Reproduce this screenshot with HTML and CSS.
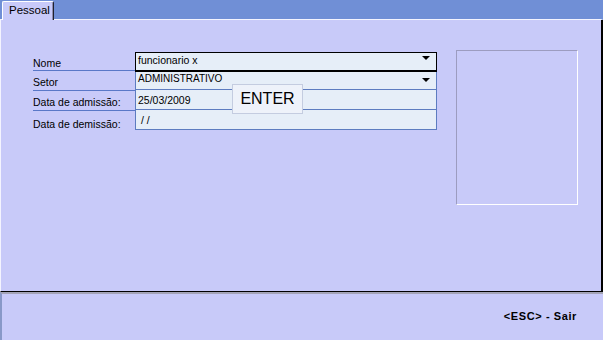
FILE: index.html
```html
<!DOCTYPE html>
<html>
<head>
<meta charset="utf-8">
<link rel="stylesheet" href="styles.css">
</head>
<body>
<div class="app">
  <div class="tabbar">
    <div class="tabgap"></div>
    <div class="tab">Pessoal</div>
    <div class="tabfill"></div>
  </div>
  <div class="panel">
    <div class="form">
      <div class="labels">
        <div class="lbl">Nome</div>
        <div class="lbl">Setor</div>
        <div class="lbl">Data de admissão:</div>
        <div class="lbl last">Data de demissão:</div>
      </div>
      <div class="fields">
        <div class="combo nome"><span>funcionario x</span><i class="arrow"></i></div>
        <div class="boxed">
          <div class="combo setor"><span>ADMINISTRATIVO</span><i class="arrow"></i></div>
          <div class="fld">25/03/2009</div>
          <div class="fld last">&nbsp;/ /</div>
        </div>
      </div>
    </div>
    <div class="photo"></div>
  </div>
  <div class="footer"><span class="esc">&lt;ESC&gt; - Sair</span></div>
  <div class="tip">ENTER</div>
</div>
</body>
</html>
```

FILE: styles.css
```css
* { box-sizing: border-box; }
html, body { margin: 0; padding: 0; }
body {
  width: 603px;
  height: 340px;
  overflow: hidden;
  background: #c8caf9;
  font-family: "Liberation Sans", Arial, sans-serif;
  color: #000;
}
.app {
  position: relative;
  width: 603px;
  height: 340px;
  display: flex;
  flex-direction: column;
}
.tabbar {
  height: 20px;
  display: flex;
  align-items: flex-end;
  background: #708fd6;
}
.tabgap {
  width: 2px;
  height: 20px;
  border-bottom: 1px solid #f4f4ff;
}
.tab {
  width: 52px;
  height: 19px;
  background: #c8caf9;
  border-left: 1px solid #ffffff;
  border-top: 1px solid #ffffff;
  border-right: 1px solid #20202c;
  box-shadow: inset -1px 0 0 #8c8cb0;
  border-radius: 2px 2px 0 0;
  font-size: 11.5px;
  line-height: 16px;
  padding-left: 6px;
}
.tabfill {
  flex: 1;
  height: 20px;
  border-bottom: 1px solid #f4f4ff;
  border-right: 2px solid #708fd6;
}
.panel {
  height: 272px;
  display: flex;
  align-items: flex-start;
  padding: 30px 0 0 32px;
  border-left: 1px solid #f4f4ff;
  border-right: 2px solid #000;
  border-bottom: 1px solid #000;
}
.form {
  display: flex;
  width: 404px;
  margin-top: 2px;
}
.labels {
  width: 102px;
  font-size: 10.5px;
}
.lbl {
  height: 20px;
  padding-top: 4px;
  line-height: 14px;
  border-bottom: 1px solid #5a78c8;
  white-space: nowrap;
}
.lbl:first-child { height: 19px; }
.lbl.last {
  border-bottom: none;
  height: 19px;
  padding-top: 6px;
}
.fields {
  width: 302px;
  font-size: 10.5px;
}
.combo {
  display: flex;
  justify-content: space-between;
  align-items: flex-start;
  background: #e6eef8;
  padding-left: 2px;
}
.combo.nome {
  height: 20px;
  border: 1px solid #000;
  border-bottom: 2px solid #000;
  line-height: 14px;
}
.combo.nome .arrow { margin-top: 3px; }
.boxed {
  background: #e6eef8;
  border-left: 1px solid #5d7cc0;
  border-right: 1px solid #5d7cc0;
}
.combo.setor {
  height: 18px;
  line-height: 13px;
  font-size: 10px;
  border-bottom: 1px solid #5d7cc0;
}
.combo.setor .arrow { margin-top: 6px; }
.arrow {
  display: block;
  width: 0;
  height: 0;
  border-left: 4px solid transparent;
  border-right: 4px solid transparent;
  border-top: 4px solid #000;
  margin-right: 6px;
}
.fld {
  height: 20px;
  padding: 3px 0 0 2px;
  line-height: 14px;
  border-bottom: 1px solid #5d7cc0;
}
.photo {
  width: 122px;
  height: 155px;
  margin-left: 19px;
  border-top: 1px solid #9c9cc0;
  border-left: 1px solid #9c9cc0;
  border-right: 1px solid #ffffff;
  border-bottom: 1px solid #ffffff;
}
.footer {
  flex: 1;
  display: flex;
  justify-content: flex-end;
  border-top: 2px solid #a4a4b8;
  border-left: 2px solid #8898c8;
  padding: 15px 26px 0 0;
}
.esc {
  font-size: 11px;
  font-weight: bold;
  letter-spacing: 0.6px;
  line-height: 14px;
}
.tip {
  position: absolute;
  left: 232px;
  top: 84px;
  width: 71px;
  height: 30px;
  background: #eef2fa;
  border: 1px solid #c4cce0;
  font-size: 16px;
  line-height: 28px;
  text-align: center;
}
```
